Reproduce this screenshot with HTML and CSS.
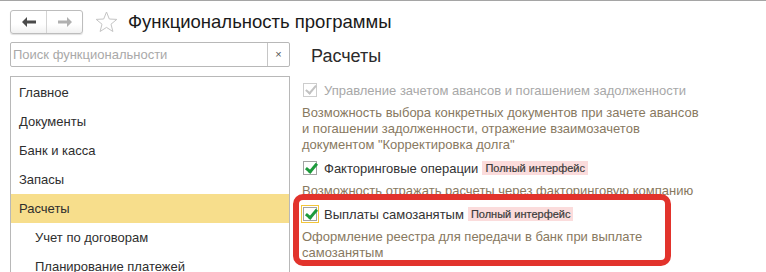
FILE: index.html
```html
<!DOCTYPE html>
<html lang="ru">
<head>
    <meta charset="UTF-8">
    <title>Функциональность программы</title>
    <link rel="stylesheet" href="styles.css">
</head>
<body>
    <div class="header">
        <div class="nav">
            <button class="nav-btn">
                <svg width="14" height="10" viewBox="0 0 14 10"><path d="M0 5 L5 0 L5 3.5 L14 3.5 L14 6.5 L5 6.5 L5 10 Z" fill="#4a4a4a"/></svg>
            </button>
            <button class="nav-btn">
                <svg width="14" height="10" viewBox="0 0 14 10"><path d="M14 5 L9 0 L9 3.5 L0 3.5 L0 6.5 L9 6.5 L9 10 Z" fill="#b0b0b0"/></svg>
            </button>
        </div>
        <svg class="star" width="23" height="22" viewBox="0 0 23 22">
            <path d="M11.5 1 L14.3 8 L21.8 8.4 L16 13.2 L17.9 20.5 L11.5 16.4 L5.1 20.5 L7 13.2 L1.2 8.4 L8.7 8 Z" fill="none" stroke="#c4c4c4" stroke-width="1"/>
        </svg>
        <h1>Функциональность программы</h1>
    </div>

    <div class="main">
        <div class="sidebar">
            <div class="search">
                <span class="placeholder">Поиск функциональности</span>
                <span class="clear">×</span>
            </div>
            <ul class="sections">
                <li>Главное</li>
                <li>Документы</li>
                <li>Банк и касса</li>
                <li>Запасы</li>
                <li class="active">Расчеты</li>
                <li class="sub">Учет по договорам</li>
                <li class="sub">Планирование платежей</li>
            </ul>
        </div>

        <div class="content">
            <h2>Расчеты</h2>

            <div class="option disabled">
                <span class="check"></span>
                <span class="label">Управление зачетом авансов и погашением задолженности</span>
            </div>
            <p class="note">Возможность выбора конкретных документов при зачете авансов и погашении задолженности, отражение взаимозачетов документом "Корректировка долга"</p>

            <div class="option">
                <span class="check"></span>
                <span class="label">Факторинговые операции</span>
                <span class="badge">Полный интерфейс</span>
            </div>
            <p class="note">Возможность отражать расчеты через факторинговую компанию</p>

            <div class="option focused">
                <span class="check"></span>
                <span class="label">Выплаты самозанятым</span>
                <span class="badge">Полный интерфейс</span>
            </div>
            <p class="note">Оформление реестра для передачи в банк при выплате самозанятым</p>

            <div class="highlight"></div>
        </div>
    </div>
</body>
</html>
```

FILE: styles.css
```css
body {
    margin: 0;
    font-family: "Liberation Sans", Arial, sans-serif;
    font-size: 13px;
    color: #333;
    background: #fff;
    border-top: 1px solid #a5a5a5;
    height: 271px;
    overflow: hidden;
}
.header {
    display: flex;
    align-items: center;
    padding: 8px 0 0 10px;
    height: 25px;
}
.nav {
    display: flex;
    width: 73px;
    height: 24px;
    box-sizing: border-box;
    border: 1px solid #bdbdbd;
    border-radius: 3px;
    box-shadow: 0 1px 1px rgba(0, 0, 0, 0.12);
    background: linear-gradient(#fff, #fff 60%, #f1f1f1);
}
.nav-btn {
    flex: 1;
    border: none;
    background: none;
    padding: 0;
    display: flex;
    align-items: center;
    justify-content: center;
}
.nav-btn + .nav-btn {
    border-left: 1px solid #d4d4d4;
}
.star {
    margin-left: 12px;
}
h1 {
    margin: 0 0 0 10px;
    font-size: 18.5px;
    font-weight: normal;
    color: #1a1a1a;
}
.main {
    display: flex;
    padding-top: 8px;
}
.sidebar {
    width: 280px;
    margin-left: 10px;
}
.search {
    display: flex;
    height: 25px;
    box-sizing: border-box;
    border: 1px solid #b8b8b8;
    border-radius: 2px;
}
.placeholder {
    flex: 1;
    padding-left: 2px;
    line-height: 23px;
    color: #a9a9a9;
}
.clear {
    width: 21px;
    border-left: 1px solid #c6c6c6;
    text-align: center;
    line-height: 22px;
    font-size: 11px;
    color: #555;
}
.sections {
    list-style: none;
    margin: 9px 0 0;
    padding: 1px 0 0;
    border: 1px solid #b8b8b8;
    border-bottom: none;
}
.sections li {
    height: 29px;
    line-height: 29px;
    padding-left: 8px;
    color: #2e2e2e;
}
.sections li.active {
    background: #f7de8c;
}
.sections li.sub {
    padding-left: 24px;
}
.content {
    position: relative;
    flex: 1;
    padding-left: 11px;
}
h2 {
    margin: 3px 0 0 10px;
    font-size: 18px;
    font-weight: normal;
    color: #2b2b2b;
    line-height: 22px;
}
.option {
    display: flex;
    align-items: center;
    height: 18px;
}
.content h2 + .option {
    margin-top: 14px;
}
.check {
    position: relative;
    width: 14px;
    height: 14px;
    box-sizing: border-box;
    border: 1px solid #a3a3a3;
    background: #fff;
    margin: 0 7px 0 2px;
}
.check::after {
    content: "";
    position: absolute;
    left: 4px;
    top: -1px;
    width: 4px;
    height: 9px;
    border: solid #1d9a3c;
    border-width: 0 3px 3px 0;
    transform: rotate(40deg);
}
.option.disabled .check {
    border-color: #cdcdcd;
}
.option.disabled .check::after {
    border-color: #c2c2c2;
    border-width: 0 2px 2px 0;
}
.option.disabled .label {
    color: #a8a8a8;
}
.option.focused .check {
    outline: 1px solid #f3c63c;
    outline-offset: 1px;
}
.label {
    color: #333;
}
.badge {
    margin-left: 4px;
    padding: 0 3px;
    background: #fbdcdc;
    font-size: 11px;
    line-height: 14px;
    color: #3a3a3a;
    -webkit-text-stroke: 0.2px #3a3a3a;
}
.note {
    margin: 6px 0 6px 1px;
    width: 405px;
    line-height: 16px;
    color: #88795f;
}
.highlight {
    position: absolute;
    left: 3px;
    top: 152px;
    width: 378px;
    height: 72px;
    box-sizing: border-box;
    border: 6px solid #e2332c;
    border-radius: 10px;
}
```
